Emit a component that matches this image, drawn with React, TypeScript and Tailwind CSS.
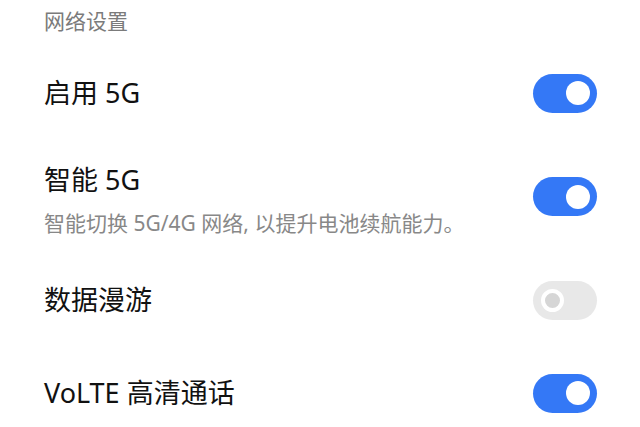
const font = { fontFamily: '"Noto Sans", "Noto Sans CJK SC", sans-serif' };

function Toggle({ on }: { on: boolean }) {
  if (on) {
    return (
      <div className="w-[64px] h-[39px] rounded-full bg-[#3478f6] flex items-center justify-end pr-[7px] shrink-0">
        <div className="w-[24px] h-[24px] rounded-full bg-white" />
      </div>
    );
  }
  return (
    <div className="w-[64px] h-[39px] rounded-full bg-[#e8e8e8] flex items-center pl-[8px] shrink-0">
      <div className="w-[23px] h-[23px] rounded-full border-[4px] border-white bg-[#d6d6d6]" />
    </div>
  );
}

const rows = [
  { title: "启用 5G", on: true, h: "h-[104px]" },
  { title: "智能 5G", sub: "智能切换 5G/4G 网络, 以提升电池续航能力。", on: true, h: "h-[103px]" },
  { title: "数据漫游", on: false, h: "h-[104px]" },
  { title: "VoLTE 高清通话", on: true, h: "h-[82px]" },
];

export default function App() {
  return (
    <div className="w-[640px] h-[427px] bg-white overflow-hidden" style={font}>
      <div className="pl-[44px] pt-[7px] h-[41px] text-[21px] leading-[28px] text-[#7b7b7b]">网络设置</div>
      {rows.map((r, i) => (
        <div key={i} className={`${r.h} flex items-center justify-between pl-[44px] pr-[43px]`}>
          <div className="flex flex-col">
            <div className="text-[27px] leading-[34px] text-[#111]">{r.title}</div>
            {r.sub && (
              <div className="text-[21px] leading-[28px] mt-[12px] text-[#888] -mb-[7px]">{r.sub}</div>
            )}
          </div>
          <Toggle on={r.on} />
        </div>
      ))}
    </div>
  );
}
